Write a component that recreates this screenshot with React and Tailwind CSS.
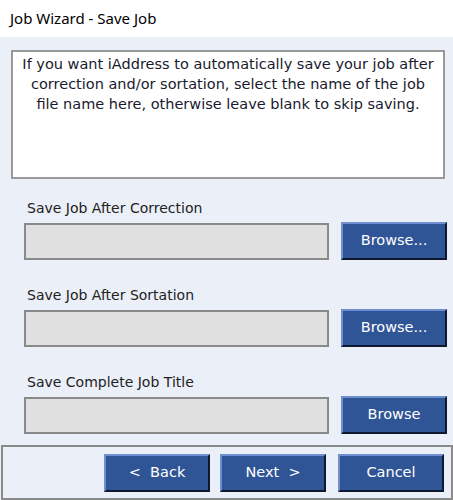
import React from "react";

function Btn({ children, className = "" }) {
  return (
    <button
      className={
        "h-[38px] w-[106px] bg-[#2f5597] text-white text-[14.5px] border-t-2 border-l-2 border-b-2 border-r-2 border-t-[#6f8fd0] border-l-[#6f8fd0] border-b-[#101830] border-r-[#101830] flex items-center justify-center " +
        className
      }
      style={{ fontFamily: "'DejaVu Sans', sans-serif" }}
    >
      {children}
    </button>
  );
}

function Field({ label, btn }) {
  return (
    <div className="flex flex-col">
      <div className="pl-[27px] text-[14px] text-[#222] leading-[17px]">{label}</div>
      <div className="flex items-center mt-[5px] pl-[24px]">
        <div className="w-[305px] h-[37px] bg-[#e0e0e0] border-2 border-[#8a8a8a]" />
        <Btn className="ml-[12px]">{btn}</Btn>
      </div>
    </div>
  );
}

export default function App() {
  return (
    <div className="w-[453px] h-[500px] flex flex-col bg-[#ebeff8] overflow-hidden" style={{ fontFamily: "'DejaVu Sans', sans-serif" }}>
      <div className="h-[37px] bg-white flex items-center pl-[10px] text-[15px] text-black" style={{ fontFamily: "'Noto Sans', sans-serif" }}>
        Job Wizard - Save Job
      </div>
      <div className="mt-[13px] ml-[11px] w-[434px] h-[129px] bg-white border-2 border-[#999] text-center text-[14.5px] leading-[20px] text-[#1a1a2e] pt-[2px] px-[2px] whitespace-nowrap">
        If you want iAddress to automatically save your job after
        <br />
        correction and/or sortation, select the name of the job
        <br />
        file name here, otherwise leave blank to skip saving.
      </div>
      <div className="mt-[21px] flex flex-col gap-[27px]">
        <Field label="Save Job After Correction" btn="Browse..." />
        <Field label="Save Job After Sortation" btn="Browse..." />
        <Field label="Save Complete Job Title" btn="Browse" />
      </div>
      <div className="mt-[11px] ml-[1px] w-[452px] h-[55px] border-2 border-[#8a8a8a] flex items-center justify-end pr-[7px] gap-[10px]">
        <Btn>&lt;&nbsp; Back</Btn>
        <Btn>Next &nbsp;&gt;</Btn>
        <Btn className="ml-[2px]">Cancel</Btn>
      </div>
    </div>
  );
}
